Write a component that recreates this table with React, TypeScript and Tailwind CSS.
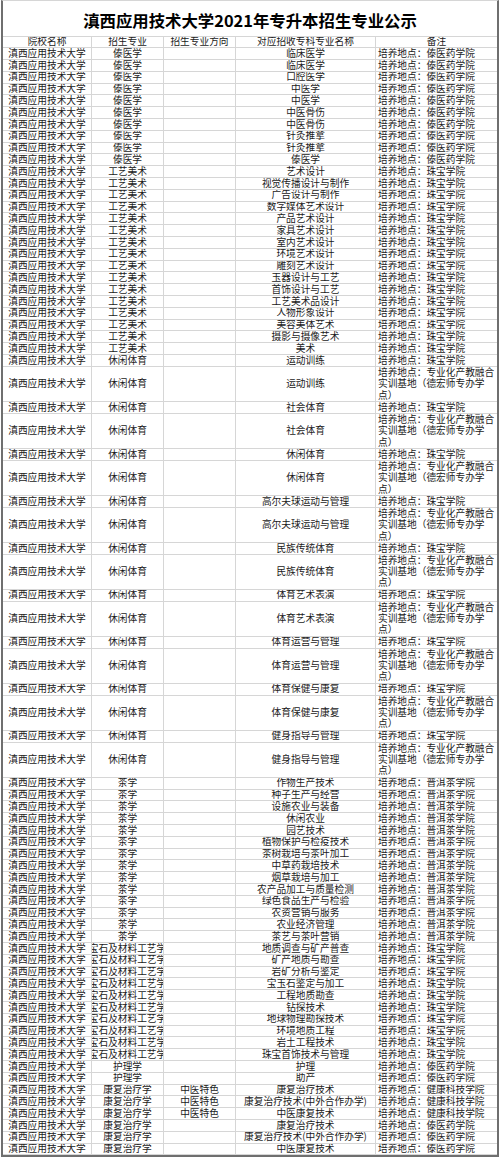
const SCHOOL = "滇西应用技术大学";

type Row = { major: string; dir: string; source: string; note: string; tall?: boolean };

const rows: Row[] = [];

function add(major: string, items: string[], note: string, dir = "") {
  items.forEach((source) => rows.push({ major, dir, source, note: "培养地点：" + note }));
}

add("傣医学", ["临床医学", "临床医学", "口腔医学", "中医学", "中医学", "中医骨伤", "中医骨伤", "针灸推拿", "针灸推拿", "傣医学"], "傣医药学院");
add(
  "工艺美术",
  [
    "艺术设计",
    "视觉传播设计与制作",
    "广告设计与制作",
    "数字媒体艺术设计",
    "产品艺术设计",
    "家具艺术设计",
    "室内艺术设计",
    "环境艺术设计",
    "雕刻艺术设计",
    "玉器设计与工艺",
    "首饰设计与工艺",
    "工艺美术品设计",
    "人物形象设计",
    "美容美体艺术",
    "摄影与摄像艺术",
    "美术",
  ],
  "珠宝学院"
);
[
  "运动训练",
  "社会体育",
  "休闲体育",
  "高尔夫球运动与管理",
  "民族传统体育",
  "体育艺术表演",
  "体育运营与管理",
  "体育保健与康复",
  "健身指导与管理",
].forEach((source) => {
  rows.push({ major: "休闲体育", dir: "", source, note: "培养地点：珠宝学院" });
  rows.push({ major: "休闲体育", dir: "", source, note: "培养地点：专业化产教融合实训基地（德宏师专办学点）", tall: true });
});
add(
  "茶学",
  [
    "作物生产技术",
    "种子生产与经营",
    "设施农业与装备",
    "休闲农业",
    "园艺技术",
    "植物保护与检疫技术",
    "茶树栽培与茶叶加工",
    "中草药栽培技术",
    "烟草栽培与加工",
    "农产品加工与质量检测",
    "绿色食品生产与检验",
    "农资营销与服务",
    "农业经济管理",
    "茶艺与茶叶营销",
  ],
  "普洱茶学院"
);
add(
  "宝石及材料工艺学",
  [
    "地质调查与矿产普查",
    "矿产地质与勘查",
    "岩矿分析与鉴定",
    "宝玉石鉴定与加工",
    "工程地质勘查",
    "钻探技术",
    "地球物理勘探技术",
    "环境地质工程",
    "岩土工程技术",
    "珠宝首饰技术与管理",
  ],
  "珠宝学院"
);
add("护理学", ["护理", "助产"], "傣医药学院");
add("康复治疗学", ["康复治疗技术", "康复治疗技术(中外合作办学)", "中医康复技术"], "健康科技学院", "中医特色");
add("康复治疗学", ["康复治疗技术", "康复治疗技术(中外合作办学)", "中医康复技术"], "傣医药学院");

const cols = "grid grid-cols-[89px_72px_72px_140px_121px]";
const cell = "flex items-center justify-center overflow-hidden whitespace-nowrap border-r border-[#d6d6d6] leading-none";

export default function App() {
  return (
    <div
      className="w-[500px] h-[1157px] overflow-hidden bg-white text-[#1a1a1a] text-[9.7px]"
      style={{ fontFamily: '"Noto Sans CJK SC", "Noto Sans", sans-serif' }}
    >
      <div className="mx-[1px] w-[498px] border-x-2 border-b-2 border-t border-x-[#6f6f6f] border-b-[#6f6f6f] border-t-[#d6d6d6]">
        <div className="h-[36px] flex items-center justify-center pt-[3px] border-b border-[#d6d6d6] text-[16.4px] font-bold text-black leading-none">
          滇西应用技术大学2021年专升本招生专业公示
        </div>
        <div className={`${cols} h-[11.3px] border-b border-[#d6d6d6]`}>
          <div className={cell}>院校名称</div>
          <div className={cell}>招生专业</div>
          <div className={cell}>招生专业方向</div>
          <div className={cell}>对应招收专科专业名称</div>
          <div className="flex items-center justify-center overflow-hidden whitespace-nowrap leading-none">备注</div>
        </div>
        {rows.map((r, i) => (
          <div key={i} className={`${cols} ${r.tall ? "h-[35.2px]" : "h-[11.8px]"} border-b border-[#d6d6d6]`}>
            <div className={cell}>{SCHOOL}</div>
            <div className={cell}>{r.major}</div>
            <div className={cell}>{r.dir}</div>
            <div className={cell}>{r.source}</div>
            <div
              className={`flex items-center overflow-hidden pl-[2px] ${
                r.tall ? "whitespace-normal leading-[11.3px]" : "whitespace-nowrap leading-none"
              }`}
            >
              <span>{r.note}</span>
            </div>
          </div>
        ))}
      </div>
    </div>
  );
}
